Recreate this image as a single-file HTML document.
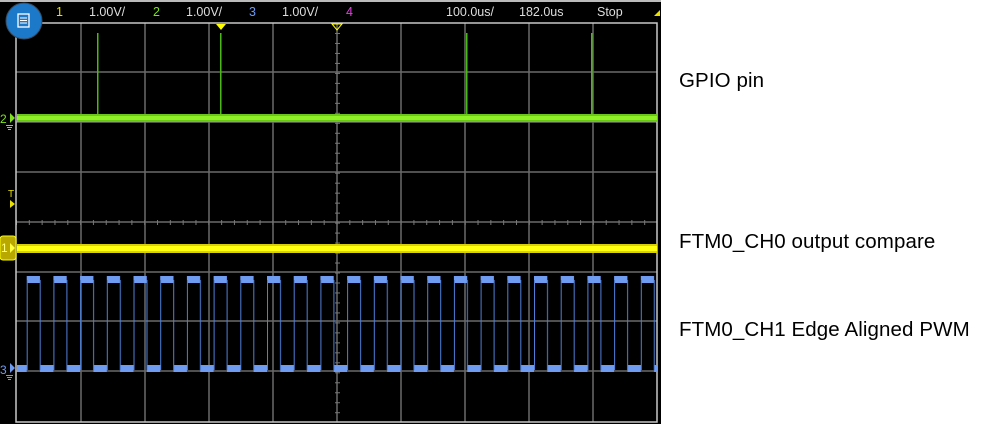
<!DOCTYPE html>
<html><head><meta charset="utf-8"><style>
html,body{margin:0;padding:0;background:#fff;width:991px;height:424px;overflow:hidden}
.lbl{position:absolute;left:679px;font-family:"Liberation Sans",sans-serif;font-size:20.5px;color:#000;white-space:nowrap;letter-spacing:0.1px}
</style></head><body>
<svg width="991" height="424" style="position:absolute;left:0;top:0" xmlns="http://www.w3.org/2000/svg">
<defs>
<pattern id="sq" patternUnits="userSpaceOnUse" x="26.7" y="0" width="26.7" height="424">
<rect x="0" y="276" width="13.3" height="7" fill="#6f9bf0"/>
<rect x="13.3" y="365" width="13.4" height="7" fill="#6f9bf0"/>
<rect x="0" y="280" width="1" height="90" fill="#4f7fd8"/>
<rect x="13" y="280" width="1" height="90" fill="#4f7fd8"/>
</pattern>
<pattern id="tx" patternUnits="userSpaceOnUse" x="16" y="0" width="12.82" height="10">
<rect x="0" y="0" width="1" height="10" fill="#777"/>
</pattern>
<pattern id="ty" patternUnits="userSpaceOnUse" x="0" y="23" width="10" height="9.98">
<rect x="0" y="0" width="10" height="1" fill="#777"/>
</pattern>
</defs>
<rect x="0" y="0" width="661" height="424" fill="#000"/>
<rect x="0" y="0" width="661" height="2" fill="#bbb"/>
<g stroke="#6a6a6a" stroke-width="1.5">
<line x1="81" y1="23" x2="81" y2="422"/><line x1="145" y1="23" x2="145" y2="422"/>
<line x1="209" y1="23" x2="209" y2="422"/><line x1="273" y1="23" x2="273" y2="422"/>
<line x1="401" y1="23" x2="401" y2="422"/><line x1="465" y1="23" x2="465" y2="422"/>
<line x1="529" y1="23" x2="529" y2="422"/><line x1="593" y1="23" x2="593" y2="422"/>
<line x1="16" y1="72" x2="657" y2="72"/><line x1="16" y1="122" x2="657" y2="122"/>
<line x1="16" y1="172" x2="657" y2="172"/><line x1="16" y1="272" x2="657" y2="272"/>
<line x1="16" y1="321" x2="657" y2="321"/><line x1="16" y1="371" x2="657" y2="371"/>
<line x1="16" y1="222" x2="657" y2="222"/><line x1="337" y1="23" x2="337" y2="422"/>
</g>
<rect x="16" y="220" width="641" height="5" fill="url(#tx)"/>
<rect x="335" y="23" width="5" height="399" fill="url(#ty)"/>
<rect x="16" y="23" width="641" height="399" fill="none" stroke="#c8c8c8" stroke-width="1.5"/>
<!-- green -->
<g fill="#4cb814"><rect x="97" y="33" width="1.5" height="85"/><rect x="220" y="33" width="1.5" height="85"/><rect x="466" y="33" width="1.5" height="85"/><rect x="591" y="33" width="1.5" height="85"/></g>
<rect x="17" y="114" width="640" height="8" fill="#6cc818"/>
<rect x="17" y="116" width="640" height="4" fill="#90f028"/>
<!-- yellow -->
<rect x="17" y="244" width="640" height="9" fill="#d8d000"/>
<rect x="17" y="246" width="640" height="5" fill="#ffff10"/>
<!-- blue -->
<rect x="17" y="272" width="640" height="102" fill="url(#sq)"/>
<!-- markers -->
<polygon points="216,24 226,24 221,30" fill="#ffff00"/>
<polygon points="332,24 342,24 337,30" fill="none" stroke="#ffff00"/>
<polygon points="10,113 15,118 10,123" fill="#7ee020"/>
<text x="0" y="123" fill="#7ee020" font-family="Liberation Sans" font-size="12">2</text>
<rect x="6" y="125" width="7" height="1" fill="#7ee020"/><rect x="7" y="127" width="5" height="1" fill="#7ee020"/><rect x="8" y="129" width="3" height="1" fill="#7ee020"/>
<text x="8" y="197" fill="#e8e000" font-family="Liberation Sans" font-size="10">T</text>
<polygon points="10,200 15,204 10,208" fill="#e8e000"/>
<rect x="0" y="236" width="16" height="24" rx="3" fill="#b8a800" stroke="#ffff00"/>
<text x="1" y="252" fill="#ffff80" font-family="Liberation Sans" font-size="12">1</text>
<polygon points="10,243 15,248 10,253" fill="#ffff40"/>
<polygon points="10,363 15,368 10,373" fill="#6f9bf0"/>
<text x="0" y="374" fill="#6f9bf0" font-family="Liberation Sans" font-size="12">3</text>
<rect x="6" y="375" width="7" height="1" fill="#6f9bf0"/><rect x="7" y="377" width="5" height="1" fill="#6f9bf0"/><rect x="8" y="379" width="3" height="1" fill="#6f9bf0"/>
<!-- top bar text -->
<g font-family="Liberation Sans" font-size="12.5">
<text x="56" y="16" fill="#e8e000">1</text>
<text x="89" y="16" fill="#ddd">1.00V/</text>
<text x="153" y="16" fill="#7ee020">2</text>
<text x="186" y="16" fill="#ddd">1.00V/</text>
<text x="249" y="16" fill="#6f9bf0">3</text>
<text x="282" y="16" fill="#ddd">1.00V/</text>
<text x="346" y="16" fill="#e040e0">4</text>
<text x="446" y="16" fill="#ddd">100.0us/</text>
<text x="519" y="16" fill="#ddd">182.0us</text>
<text x="597" y="16" fill="#ddd">Stop</text>
</g>
<polygon points="654,16 660,16 660,10" fill="#e8e000"/>
<!-- button -->
<circle cx="24" cy="21" r="18" fill="#1c78c8" stroke="#3a4a5a" stroke-width="1"/>
<rect x="18" y="14" width="11" height="13" fill="none" stroke="#fff" stroke-width="1.3"/>
<g stroke="#fff" stroke-width="1"><line x1="20" y1="18" x2="27" y2="18"/><line x1="20" y1="20.5" x2="27" y2="20.5"/><line x1="20" y1="23" x2="27" y2="23"/></g>
</svg>
<div class="lbl" style="top:69px">GPIO pin</div>
<div class="lbl" style="top:230px">FTM0_CH0 output compare</div>
<div class="lbl" style="top:318px">FTM0_CH1 Edge Aligned PWM</div>
</body></html>
